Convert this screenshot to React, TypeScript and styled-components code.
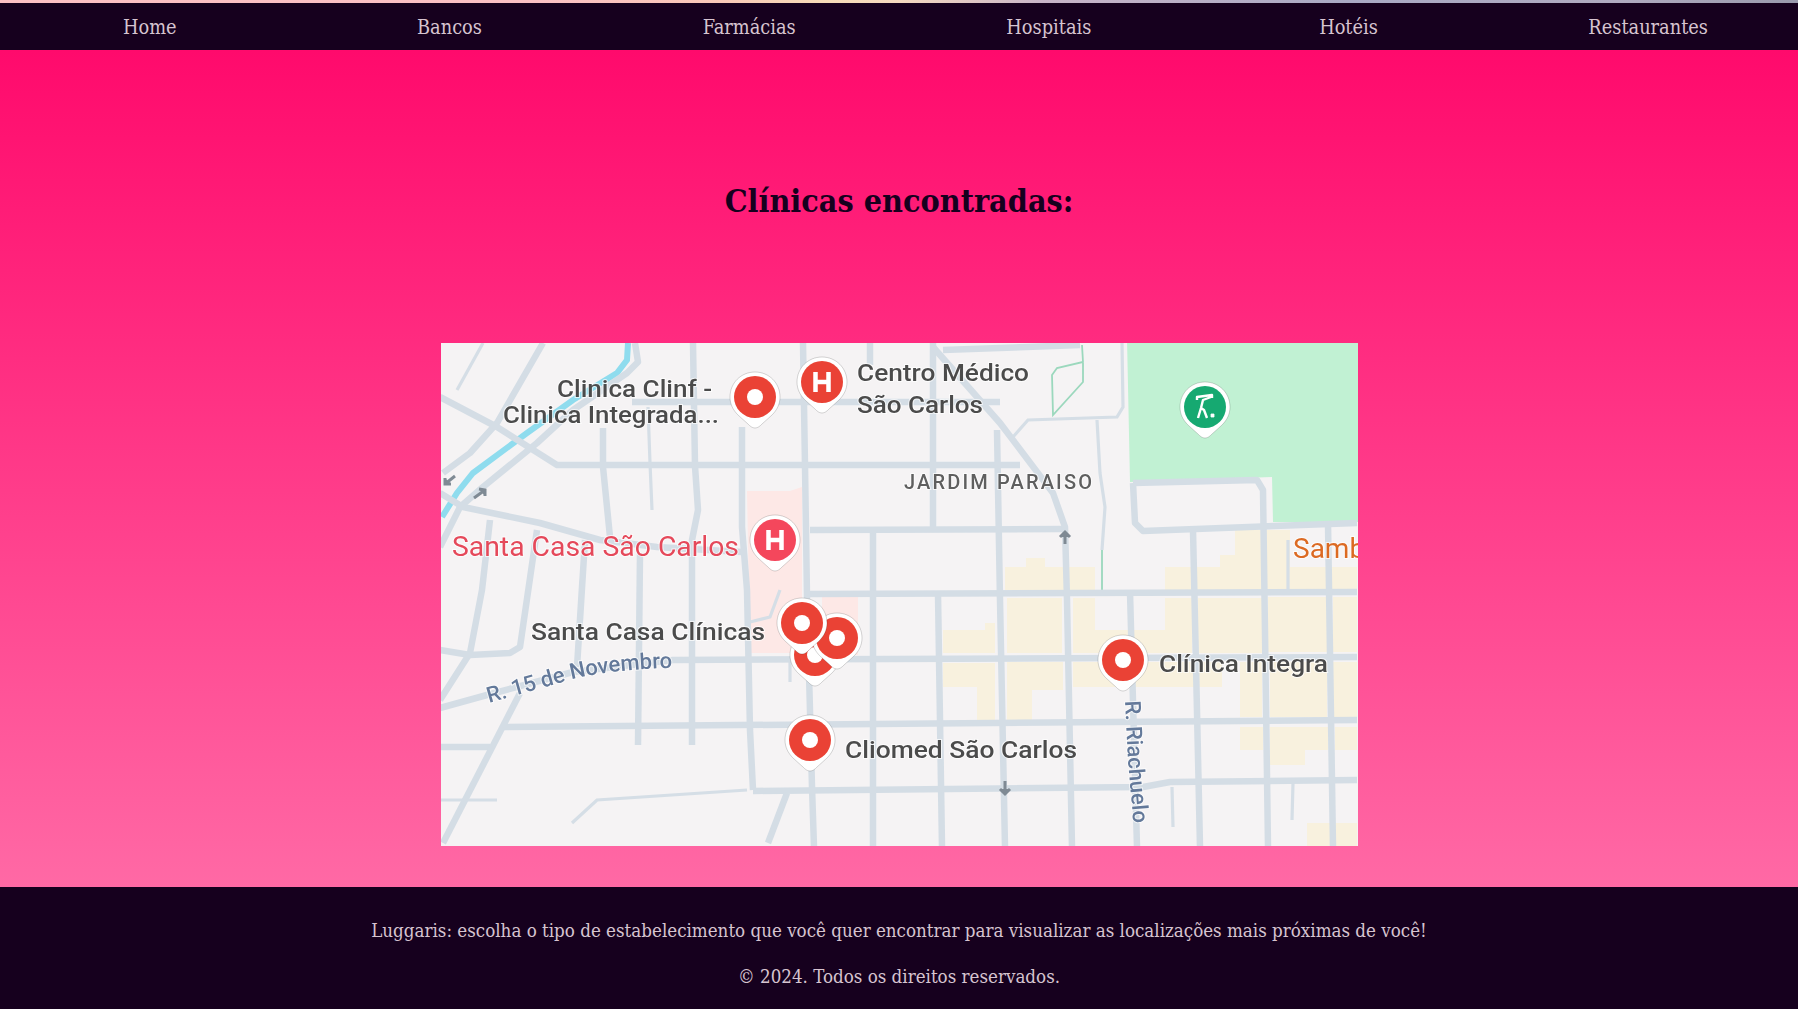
import React from "react";
import styled, { createGlobalStyle } from "styled-components";

const GlobalStyle = createGlobalStyle`
  html, body {
    margin: 0;
    padding: 0;
  }
  body {
    font-family: "DejaVu Serif Condensed", "DejaVu Serif", "Liberation Serif", serif;
    background: #16001e;
  }
`;

const Page = styled.div`
  display: flex;
  flex-direction: column;
  min-height: 1009px;
`;

const TopStripe = styled.div`
  height: 3px;
  background: linear-gradient(
    90deg,
    #fcc0c4 0%,
    #fbc0c4 30%,
    #f9c8b8 40%,
    #f6dcb8 46%,
    #f5d9c0 50%,
    #c8b4c8 58%,
    #a9a9c4 75%,
    #b0aac0 90%,
    #9a9aad 100%
  );
`;

const Nav = styled.nav`
  display: grid;
  grid-template-columns: repeat(6, 1fr);
  height: 47px;
  background: #16001e;
`;

const NavLink = styled.a`
  display: flex;
  align-items: center;
  justify-content: center;
  padding-top: 1px;
  font-size: 19.8px;
  color: #d6c4d0;
  text-decoration: none;
`;

const Main = styled.main`
  display: flex;
  flex-direction: column;
  align-items: center;
  height: 837px;
  background: linear-gradient(180deg, #ff0a6c 0%, #ff69a5 100%);
`;

const Title = styled.h1`
  margin: 131px 0 0;
  font-size: 32px;
  line-height: 40px;
  font-weight: 700;
  color: #16001e;
`;

const MapFrame = styled.div`
  width: 917px;
  height: 503px;
  margin-top: 122px;
  overflow: hidden;
  background: #f5f3f4;
`;

const MapSvg = styled.svg`
  display: block;
  width: 917px;
  height: 503px;
`;

const Footer = styled.footer`
  display: flex;
  flex-direction: column;
  align-items: center;
  gap: 22px;
  height: 122px;
  padding-top: 32px;
  box-sizing: border-box;
  background: #16001e;
`;

const FooterText = styled.p`
  margin: 0;
  font-size: 18.6px;
  line-height: 24px;
  color: #d6c4d0;
`;

const navItems = ["Home", "Bancos", "Farmácias", "Hospitais", "Hotéis", "Restaurantes"];

const roads = [
  "M543 343L497 423L470 453L443 473",
  "M635 343L638 362L627 373L573 410L537 443L483 487L460 507L440 547",
  "M440 397L497 427L557 465L1020 465",
  "M632 402L1000 402",
  "M440 493L463 507L540 523L600 540L657 547L742 552",
  "M693 343L695 466L698 510L692 540L692 745",
  "M803 343L805 466L807 597L812 787L814 847",
  "M742 427L742 527L747 590L750 730L753 790",
  "M870 343L870 365",
  "M873 533L873 847",
  "M810 530L1063 529",
  "M810 594L1357 592",
  "M933 343L933 530",
  "M933 347L1000 423L1053 493L1065 527L1067 600L1072 847",
  "M943 350L1080 345",
  "M997 430L1000 600L1005 847",
  "M938 594L942 847",
  "M1133 483L1257 480L1263 490L1268 847",
  "M1133 483L1135 523L1143 531L1357 523",
  "M1193 530L1200 847",
  "M1328 523L1333 847",
  "M1130 592L1137 847",
  "M440 708L487 695L573 672L673 660L1357 657",
  "M503 727L1357 720",
  "M440 747L490 747",
  "M440 700L470 653L482 590L490 520",
  "M440 650L470 655L510 653L520 647L537 530",
  "M443 843L520 693",
  "M577 667L585 540",
  "M610 537L603 467L603 428",
  "M640 553L638 745",
  "M753 791L1143 787L1170 782L1357 780",
  "M787 793L768 843",
];

const thinRoads = [
  "M483 343L457 390",
  "M648 407L650 463L652 510",
  "M1097 420L1100 473L1105 507L1102 550",
  "M1013 437L1028 420L1117 417L1123 407L1122 343",
  "M440 800L497 800",
  "M572 823L597 800L747 790",
  "M790 662L790 682",
  "M1172 787L1173 827",
  "M1293 783L1292 820",
  "M1288 540L1288 590",
  "M780 590L770 617L750 622",
];

const tanBlocks = [
  "M1005 567H1095V590H1005Z",
  "M1026 558H1045V567H1026Z",
  "M1165 567H1220V555H1235V530H1290V590H1165Z",
  "M1290 567H1357V590H1290Z",
  "M943 630H985V623H995V653H943Z",
  "M1007 598H1062V653H1007Z",
  "M1073 598H1095V630H1128V653H1073Z",
  "M1133 630H1165V598H1192V653H1133Z",
  "M1198 598H1262V653H1198Z",
  "M1268 597H1327V652H1268Z",
  "M1333 597H1357V652H1333Z",
  "M943 663H995V720H977V687H943Z",
  "M1007 662H1063V690H1032V720H1007Z",
  "M1073 662H1127V687H1073Z",
  "M1133 662H1222V687H1133Z",
  "M1240 662H1262V717H1240Z",
  "M1270 662H1327V717H1270Z",
  "M1333 662H1357V717H1333Z",
  "M1240 727H1263V750H1240Z",
  "M1270 727H1328V750H1305V765H1270Z",
  "M1335 727H1357V750H1335Z",
  "M1307 823H1357V847H1307Z",
];

type PinKind = "dot" | "hospital" | "golf";

type PinData = { x: number; y: number; kind: PinKind; color: string };

const RED = "#ea4335";

const pins: PinData[] = [
  { x: 755, y: 397, kind: "dot", color: RED },
  { x: 822, y: 382, kind: "hospital", color: RED },
  { x: 775, y: 540, kind: "hospital", color: "#f4475c" },
  { x: 1205, y: 407, kind: "golf", color: "#18a971" },
  { x: 815, y: 655, kind: "dot", color: RED },
  { x: 837, y: 638, kind: "dot", color: RED },
  { x: 802, y: 623, kind: "dot", color: RED },
  { x: 810, y: 740, kind: "dot", color: RED },
  { x: 1123, y: 660, kind: "dot", color: RED },
];

const Pin = ({ x, y, kind, color }: PinData) => (
  <g transform={`translate(${x} ${y})`}>
    <path
      d="M0 31C-3 31 -5 29 -7 27L-17 18C-22 13 -25 7 -25 0C-25 -14 -14 -25 0 -25C14 -25 25 -14 25 0C25 7 22 13 17 18L7 27C5 29 3 31 0 31Z"
      fill="#fff"
      stroke="#000"
      strokeOpacity="0.16"
      strokeWidth="1"
    />
    <circle r="21" fill={color} />
    {kind === "dot" && <circle r="8" fill="#fff" />}
    {kind === "hospital" && (
      <path d="M-6.5 -10V10M6.5 -10V10M-6.5 0H6.5" stroke="#fff" strokeWidth="4.5" fill="none" />
    )}
    {kind === "golf" && (
      <g stroke="#fff" fill="none" strokeWidth="2.4" strokeLinejoin="round">
        <path d="M-8 -7V-10L7 -12V-9M6 -10L-2 -7L-4 1L-7 11M-4 1L-1 3L2 11" />
        <rect x="6" y="7" width="3" height="3" fill="#fff" strokeWidth="0.8" />
      </g>
    )}
  </g>
);

type LabelProps = {
  x: number;
  y: number;
  width: number;
  children: string;
};

const Label = styled.text`
  font-family: Roboto, "Noto Sans", sans-serif;
  font-size: 24px;
  font-weight: 500;
  fill: #4c4c4c;
  stroke: #fff;
  stroke-width: 2px;
  stroke-opacity: 0.7;
  paint-order: stroke;
`;

const HospitalLabel = styled(Label)`
  font-size: 28px;
  font-weight: 400;
  fill: #e5485a;
`;

const AreaLabel = styled(Label)`
  font-size: 20px;
  fill: #5e5e5e;
`;

const ShopLabel = styled(Label)`
  font-size: 28px;
  font-weight: 400;
  fill: #dc6a24;
`;

const StreetLabel = styled(Label)`
  font-size: 22px;
  fill: #64799a;
`;

const PlaceLabel = ({ x, y, width, children }: LabelProps) => (
  <Label x={x} y={y} textLength={width} lengthAdjust="spacingAndGlyphs">
    {children}
  </Label>
);

const MapDrawing = () => (
  <MapSvg viewBox="441 343 917 503" xmlns="http://www.w3.org/2000/svg">
    <defs>
      <filter id="soft" x="-2%" y="-2%" width="104%" height="104%">
        <feGaussianBlur stdDeviation="0.7" />
      </filter>
      <path id="novembro" d="M489 703L573 679Q620 668 680 668" />
      <path id="riachuelo" d="M1125 701L1128 760L1134 830" />
    </defs>
    <g filter="url(#soft)">
      <rect x="436" y="338" width="927" height="513" fill="#f5f3f4" />
      <path d="M1127 338H1363V522H1273L1272 477L1130 482Z" fill="#c1f1d3" />
      <path d="M747 491H790L802 487V653H750Z" fill="#fde8e6" />
      <path d="M822 597H858V655H822Z" fill="#fde8e6" />
      {tanBlocks.map((d) => (
        <path key={d} d={d} fill="#f8f1de" />
      ))}
      <path
        d="M1082 345L1083 362L1057 368L1052 375L1053 415L1083 382L1083 362M1102 548L1102 590"
        fill="none"
        stroke="#9bd8bd"
        strokeWidth="1.8"
      />
      <path
        d="M628 343L627 360L617 373L573 400L527 433L473 473L457 493L442 517"
        fill="none"
        stroke="#8fdcee"
        strokeWidth="6"
      />
      {thinRoads.map((d) => (
        <path key={d} d={d} fill="none" stroke="#d5dee6" strokeWidth="3.2" />
      ))}
      {roads.map((d) => (
        <path key={d} d={d} fill="none" stroke="#d4dde5" strokeWidth="6.5" strokeLinejoin="round" />
      ))}
      <g stroke="#7f8a94" strokeWidth="3" fill="#7f8a94">
        <path d="M455 476L445 484M445 478L445 484L451 484" />
        <path d="M474 498L485 490M479 489L485 490L485 496" />
        <path d="M1065 544V532M1060 537L1065 532L1070 537" />
        <path d="M1005 781V794M1000 789L1005 794L1010 789" />
      </g>
      {pins.map((pin) => (
        <Pin key={`${pin.x}-${pin.y}`} {...pin} />
      ))}
      <PlaceLabel x={557} y={397} width={155}>Clinica Clinf -</PlaceLabel>
      <PlaceLabel x={503} y={423} width={216}>Clinica Integrada...</PlaceLabel>
      <PlaceLabel x={857} y={381} width={172}>Centro Médico</PlaceLabel>
      <PlaceLabel x={857} y={413} width={126}>São Carlos</PlaceLabel>
      <PlaceLabel x={531} y={640} width={234}>Santa Casa Clínicas</PlaceLabel>
      <PlaceLabel x={845} y={758} width={232}>Cliomed São Carlos</PlaceLabel>
      <PlaceLabel x={1159} y={672} width={169}>Clínica Integra</PlaceLabel>
      <AreaLabel x={904} y={489} textLength={188}>JARDIM PARAISO</AreaLabel>
      <HospitalLabel x={452} y={556} textLength={287} lengthAdjust="spacingAndGlyphs">
        Santa Casa São Carlos
      </HospitalLabel>
      <ShopLabel x={1293} y={558}>Samb</ShopLabel>
      <StreetLabel>
        <textPath href="#novembro">R. 15 de Novembro</textPath>
      </StreetLabel>
      <StreetLabel>
        <textPath href="#riachuelo">R. Riachuelo</textPath>
      </StreetLabel>
    </g>
  </MapSvg>
);

export default function App() {
  return (
    <Page>
      <GlobalStyle />
      <TopStripe />
      <Nav>
        {navItems.map((item) => (
          <NavLink key={item} href="#">
            {item}
          </NavLink>
        ))}
      </Nav>
      <Main>
        <Title>Clínicas encontradas:</Title>
        <MapFrame>
          <MapDrawing />
        </MapFrame>
      </Main>
      <Footer>
        <FooterText>
          Luggaris: escolha o tipo de estabelecimento que você quer encontrar para visualizar as localizações mais próximas de você!
        </FooterText>
        <FooterText>© 2024. Todos os direitos reservados.</FooterText>
      </Footer>
    </Page>
  );
}
